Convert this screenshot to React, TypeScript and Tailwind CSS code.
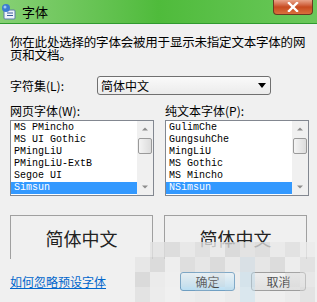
import React from 'react';

const cjk = '"Noto Sans CJK SC", "Noto Sans", sans-serif';
const mono = '"Liberation Mono", "DejaVu Sans Mono", monospace';

const webFonts = ['MS PMincho', 'MS UI Gothic', 'PMingLiU', 'PMingLiU-ExtB', 'Segoe UI', 'Simsun'];
const textFonts = ['GulimChe', 'GungsuhChe', 'MingLiU', 'MS Gothic', 'MS Mincho', 'NSimsun'];

// mosaic watermark cells, 12 x 4
const mosaic = [
  'bg-[#f0f0f0]/0', 'bg-[#e2e2e2]/80', 'bg-[#d8d8d8]/80', 'bg-[#e6e6e6]/80', 'bg-[#dcdcdc]/80', 'bg-[#e9e9e9]/80', 'bg-[#d4d4d4]/80', 'bg-[#e0e0e0]/80', 'bg-[#d9d9d9]/80', 'bg-[#e8e8e8]/80', 'bg-[#dedede]/80', 'bg-[#ebebeb]/80',
  'bg-[#e5e5e5]/80', 'bg-[#d6d6d6]/80', 'bg-[#eeeeee]/80', 'bg-[#dadada]/80', 'bg-[#e4e4e4]/80', 'bg-[#d2d2d2]/70', 'bg-[#e7e7e7]/80', 'bg-[#cfd9df]/70', 'bg-[#e3e3e3]/80', 'bg-[#d7d7d7]/80', 'bg-[#ececec]/80', 'bg-[#dfdfdf]/80',
  'bg-[#d4d4d4]/80', 'bg-[#e8e8e8]/60', 'bg-[#ededed]/40', 'bg-[#e0e0e0]/40', 'bg-[#e6e6e6]/40', 'bg-[#dcdcdc]/50', 'bg-[#e9e9e9]/40', 'bg-[#c9dde8]/70', 'bg-[#e5e5e5]/40', 'bg-[#f4f4f4]/30', 'bg-[#dadada]/50', 'bg-[#e2e2e2]/70',
  'bg-[#e0e0e0]/80', 'bg-[#eaeaea]/60', 'bg-[#f2f2f2]/30', 'bg-[#e8e8e8]/30', 'bg-[#e1e1e1]/40', 'bg-[#ededed]/30', 'bg-[#e4e4e4]/40', 'bg-[#d0e2ec]/70', 'bg-[#e9e9e9]/40', 'bg-[#eeeeee]/30', 'bg-[#e3e3e3]/40', 'bg-[#dddddd]/70',
];

const FontList: React.FC<{ items: string[] }> = ({ items }) => (
  <div className="flex h-[76px] w-[144px] border border-[#828790] bg-white">
    <div className="flex flex-1 flex-col pt-[1px]" style={{ fontFamily: mono }}>
      {items.map((f, i) => (
        <div
          key={f}
          className={`h-[12px] pl-[3px] text-[10px] leading-[12px] ${
            i === items.length - 1 ? 'bg-[#3399ff] text-white' : 'text-black'
          }`}
        >
          {f}
        </div>
      ))}
    </div>
    <div className="flex w-[16px] flex-col items-center bg-[#f0f0f0]">
      <svg width="16" height="16" viewBox="0 0 16 16">
        <path d="M5 9.5 L8 6.5 L11 9.5 Z" fill="#8c8c8c" />
      </svg>
      <div className="mt-[1px] h-[16px] w-[14px] rounded-[2px] border border-[#9a9a9a] bg-gradient-to-r from-[#f4f4f4] to-[#dcdcdc]" />
      <div className="flex-1" />
      <svg width="16" height="16" viewBox="0 0 16 16">
        <path d="M5 6.5 L8 9.5 L11 6.5 Z" fill="#8c8c8c" />
      </svg>
    </div>
  </div>
);

export default function App() {
  return (
    <div className="relative h-[302px] w-[317px] overflow-hidden bg-[#f0f0f0]" style={{ fontFamily: cjk }}>
      {/* Title bar */}
      <div className="relative flex h-[24px] items-center border-b border-[#2f9a2f] bg-gradient-to-r from-[#86d074] via-[#4fbb3b] to-[#6ac85a]">
        <svg width="18" height="18" viewBox="0 0 18 18" className="ml-[1px]">
          <rect x="3" y="7" width="11" height="9" rx="1" fill="#eef3fa" stroke="#5a7aa8" />
          <circle cx="5" cy="5" r="4" fill="#3b7bd0" />
          <circle cx="4" cy="4" r="1.5" fill="#9cc7f2" />
          <path d="M6 10 H12 M6 12.5 H12" stroke="#3b5f99" strokeWidth="1.2" />
        </svg>
        <span className="ml-[3px] text-[13px] leading-none text-black">字体</span>
        <div className="absolute right-[4px] top-0 flex h-[15px] w-[40px] items-center justify-center rounded-b-[4px] border border-t-0 border-[#6b3a22] bg-gradient-to-b from-[#e8a48a] via-[#c74a1f] to-[#d9703c]">
          <svg width="12" height="10" viewBox="0 0 12 10">
            <path d="M2 1 L10 9 M10 1 L2 9" stroke="#fff" strokeWidth="2.4" strokeLinecap="square" />
          </svg>
        </div>
      </div>

      <div className="flex flex-col px-[10px]">
        <p className="mt-[11px] text-[12.5px] leading-[13px] tracking-[-0.2px] text-black">
          你在此处选择的字体会被用于显示未指定文本字体的网
          <br />
          页和文档。
        </p>

        {/* Charset */}
        <div className="mt-[15px] flex h-[19px] items-center">
          <span className="w-[87px] text-[12px] text-black">字符集(L):</span>
          <div className="flex h-[19px] w-[174px] items-center justify-between rounded-[3px] border border-[#707070] bg-gradient-to-b from-[#fafafa] to-[#ebebeb] pl-[3px] pr-[4px]">
            <span className="text-[12px] leading-none text-black">简体中文</span>
            <svg width="8" height="5" viewBox="0 0 8 5">
              <path d="M0 0 H8 L4 5 Z" fill="#000" />
            </svg>
          </div>
        </div>

        {/* Lists */}
        <div className="mt-[6px] flex gap-[11px]">
          <div className="flex flex-col">
            <span className="h-[19px] text-[12px] leading-[19px] text-black">网页字体(W):</span>
            <FontList items={webFonts} />
          </div>
          <div className="flex flex-col">
            <span className="h-[19px] text-[12px] leading-[19px] text-black">纯文本字体(P):</span>
            <FontList items={textFonts} />
          </div>
        </div>

        {/* Preview */}
        <div className="mt-[19px] flex gap-[11px]">
          <div className="flex h-[44px] w-[144px] items-center justify-center border border-b-0 border-[#a0a0a0] pt-[2px] text-[18px] text-[#222]">
            简体中文
          </div>
          <div className="flex h-[44px] w-[144px] items-center justify-center border border-b-0 border-[#a0a0a0] pt-[2px] text-[18px] text-[#222]">
            简体中文
          </div>
        </div>

        {/* Footer */}
        <div className="mt-[13px] flex h-[19px] items-center">
          <span className="w-[170px] text-[12px] leading-none text-[#0066cc] underline">如何忽略预设字体</span>
          <button className="h-[19px] w-[55px] rounded-[3px] border border-[#3c7fb1] bg-gradient-to-b from-[#eaf6fd] to-[#a7d9f5] text-[12px] leading-none text-black">
            确定
          </button>
          <button className="ml-[16px] h-[19px] w-[55px] rounded-[3px] border border-[#707070] bg-gradient-to-b from-[#f2f2f2] to-[#dddddd] text-[12px] leading-none text-black">
            取消
          </button>
        </div>
      </div>

      {/* mosaic watermark */}
      <div className="absolute left-[135px] top-[242px] grid grid-cols-12">
        {mosaic.map((c, i) => (
          <div key={i} className={`h-[15px] w-[15px] ${c}`} />
        ))}
      </div>
    </div>
  );
}
